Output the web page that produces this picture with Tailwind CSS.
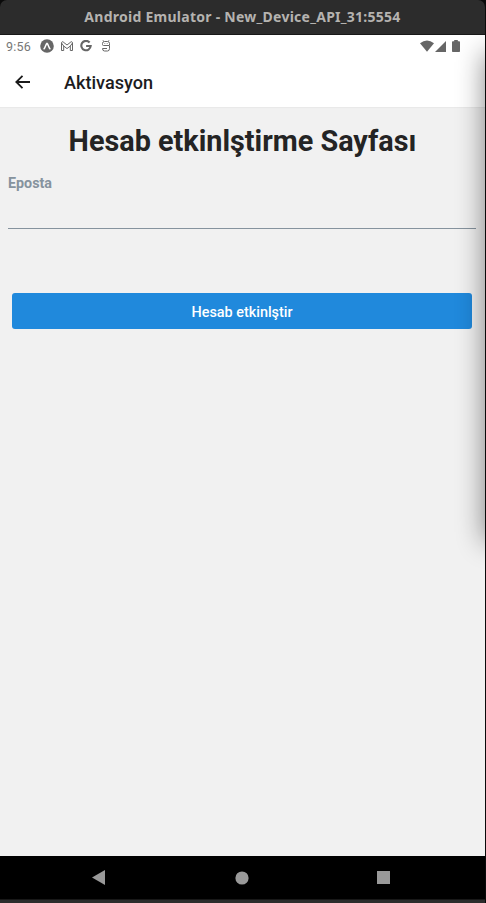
<!DOCTYPE html>
<html lang="tr">
<head>
<meta charset="utf-8">
<title>Aktivasyon</title>
<script src="https://cdn.jsdelivr.net/npm/@tailwindcss/browser@4"></script>
</head>
<body class="w-[486px] h-[903px] overflow-hidden bg-[#0a0a0a] font-['Roboto',sans-serif]">
<div class="w-[485px] h-[903px] flex flex-col">
  <header class="h-[35px] shrink-0 rounded-t-[7px] bg-[#2c2c2c] border-b border-[#181818] flex items-center justify-center">
    <span class="font-['Noto_Sans','Open_Sans',sans-serif] font-bold text-[14px] leading-5 tracking-[0.26px] text-[#b5b3b0] whitespace-nowrap">Android Emulator - New_Device_API_31:5554</span>
  </header>
  <div class="relative overflow-hidden flex-1 flex flex-col bg-[#f1f1f1]">
    <div class="h-[72px] shrink-0 bg-white shadow-[0_1px_1px_rgba(0,0,0,0.03)]">
      <div class="h-[23px] flex items-center pl-[6px] pr-[24px] text-[#666]">
        <span class="w-[34px] text-[12.5px] leading-[22px] tracking-[0.2px] text-[#777]">9:56</span>
        <svg class="w-[14px] h-[14px] -mt-px" viewBox="0 0 14 14"><circle cx="7" cy="7" r="6.8" fill="#666"/><path d="M4.1 9.8C5.3 8.2 5.8 5.3 7 4.4C8.2 5.3 8.7 8.2 9.9 9.8" fill="none" stroke="#fff" stroke-width="1.5" stroke-linecap="round"/></svg>
        <svg class="ml-[6px] w-[14px] h-[12px] -mt-px" viewBox="0 0 14 12" fill="none" stroke="#666" stroke-width="1"><path d="M1.5 10.5V2.5Q2 1.2 3.2 2L7 5L10.8 2Q12 1.2 12.5 2.5V10.5H10.3V6L7 8.6L3.7 6V10.5ZM1.5 3L3.7 6M12.5 3L10.3 6"/></svg>
        <svg class="ml-[6px] w-[12px] h-[12px] -mt-px" viewBox="0 0 12 12" fill="none" stroke="#666" stroke-width="2.1"><path d="M9.6 2.5A4.7 4.7 0 1 0 10.7 6H6.1"/></svg>
        <svg class="ml-[9px] w-[10px] h-[12px] -mt-px" viewBox="0 0 10 12" fill="none" stroke="#666" stroke-width="1"><path d="M8.5 5V3.5Q8.5 1.5 6.5 1.5H3.5Q1.5 1.5 1.5 3.5V4.5Q1.5 5.5 2.5 5.5H8.5V8.5Q8.5 11 6.5 11H3.5Q1.5 11 1.5 8.5H6M2 .3L2.8 1.5M8 .3L7.2 1.5M3.5 3.5H4.2M5.8 3.5H6.5"/></svg>
        <svg class="ml-auto w-[14px] h-[12px] -mt-px" viewBox="0 0 14 12"><path d="M0 3.2Q7-2 14 3.2L7 11.7Z" fill="#666"/></svg>
        <svg class="ml-[1px] w-[11px] h-[11px]" viewBox="0 0 11 11"><path d="M11 0V11H0Z" fill="#666"/></svg>
        <svg class="ml-[6px] mr-px w-[8px] h-[12px] -mt-px" viewBox="0 0 8 12"><path d="M2.2 0H5.8V1.2H7.2Q8 1.2 8 2V11.2Q8 12 7.2 12H.8Q0 12 0 11.2V2Q0 1.2.8 1.2H2.2Z" fill="#666"/></svg>
      </div>
      <div class="h-[49px] flex items-center pl-[15px]">
        <svg class="w-[15px] h-[14px] -mt-px" viewBox="0 0 15 14" fill="none" stroke="#1a1a1a" stroke-width="1.8"><path d="M15 7H1.4M7.5 .8L1.3 7L7.5 13.2"/></svg>
        <h1 class="ml-[34px] font-medium text-[18.1px] leading-6 text-[#1c1c1e]">Aktivasyon</h1>
      </div>
    </div>
    <main class="flex-1 pl-[8px] pr-[9px]">
      <h2 class="pt-[16px] pl-[1px] text-center font-bold text-[28.8px] leading-[36px] text-[#242424] whitespace-nowrap">Hesab etkinlştirme Sayfası</h2>
      <label class="block mt-[14px] font-bold text-[14.3px] leading-[20px] text-[#86939e]">Eposta</label>
      <div class="h-[36px] border-b border-[#86939e]"></div>
      <button class="block mt-[64px] ml-[4px] w-[460px] h-[36px] pt-[3px] rounded-[3px] bg-[#2089dc] font-medium text-[14.4px] text-white">Hesab etkinlştir</button>
    </main>
    <div class="absolute left-[485px] top-[18px] w-[60px] h-[488px] shadow-[0_0_28px_0_rgba(0,0,0,0.48)]"></div>
  </div>
  <nav class="h-[43px] shrink-0 bg-black flex items-center">
    <svg class="ml-[92px] w-[13px] h-[15px]" viewBox="0 0 13 15"><path d="M13 0V15L0 7.5Z" fill="#999"/></svg>
    <svg class="ml-[130px] w-[14px] h-[14px]" viewBox="0 0 14 14"><circle cx="7" cy="7" r="6.6" fill="#999"/></svg>
    <span class="ml-[128px] size-[13px] bg-[#999]"></span>
  </nav>
  <div class="h-[4px] shrink-0 bg-[#2c2c2c] border-t border-[#181818]"></div>
</div>
</body>
</html>
